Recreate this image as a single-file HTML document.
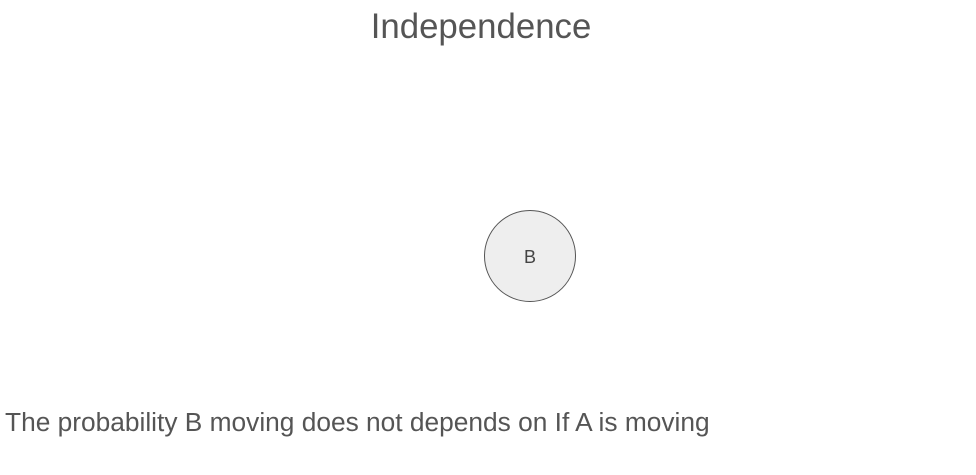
<!DOCTYPE html>
<html><head><style>
body{margin:0;width:976px;height:475px;background:#fff;font-family:"Liberation Sans",Arial,sans-serif;color:#555;position:relative;overflow:hidden}
.t{position:absolute;left:0;width:962px;text-align:center;top:6px;font-size:34.8px;line-height:42px}
.c{position:absolute;left:484px;top:210px;width:90px;height:90px;border:1px solid #555;border-radius:50%;background:#eee;text-align:center;line-height:92px;font-size:18px;color:#444}
.b{position:absolute;left:5px;top:406px;font-size:26.3px;line-height:32px}
</style></head><body>
<div class="t">Independence</div>
<div class="c">B</div>
<div class="b">The probability B moving does not depends on If A is moving</div>
</body></html>
